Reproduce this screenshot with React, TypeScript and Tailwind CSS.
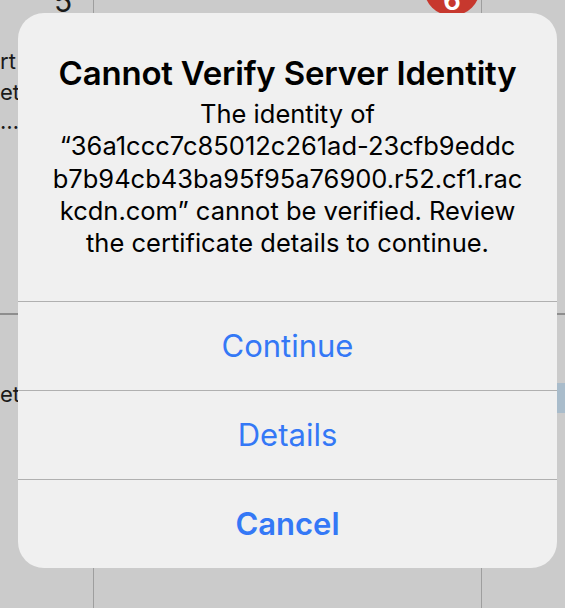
import React from 'react';

const bodyLines = [
  'The identity of',
  '\u201C36a1ccc7c85012c261ad-23cfb9eddc',
  'b7b94cb43ba95f95a76900.r52.cf1.rac',
  'kcdn.com\u201D cannot be verified. Review',
  'the certificate details to continue.',
];

const actions = [
  { label: 'Continue', bold: false },
  { label: 'Details', bold: false },
  { label: 'Cancel', bold: true },
];

export default function App() {
  return (
    <div
      className="relative w-[565px] h-[608px] overflow-hidden bg-[#cbcbcb]"
      style={{ fontFamily: 'Inter, "Noto Sans", sans-serif' }}
    >
      {/* calendar behind the alert */}
      <div className="grid grid-cols-[94px_388px_83px] h-full">
        <div className="flex flex-col border-r border-[#9e9e9e] text-[#1a1a1a]">
          <div className="h-[313px] flex flex-col relative">
            <span className="absolute left-[54px] -top-[14px] text-[30px] leading-none">5</span>
            <span className="mt-[46px] text-[22px] leading-[31px]">rt</span>
            <span className="text-[22px] leading-[31px]">et</span>
            <span className="text-[22px] leading-[31px] -mt-[2px]">…</span>
          </div>
          <div className="h-[2px] bg-[#8e8e8e]" />
          <div className="pt-[64px] text-[22px] leading-[31px]">et</div>
        </div>
        <div className="border-r border-[#9e9e9e]" />
        <div className="flex flex-col">
          <div className="h-[313px]" />
          <div className="h-[2px] bg-[#8e8e8e]" />
          <div className="mt-[68px] h-[30px] bg-[#a9bccb]" />
        </div>
      </div>

      {/* badge peeking above the alert */}
      <div className="absolute left-[424px] -top-[40px] w-[56px] h-[56px] rounded-full bg-[#c7382e] flex items-end justify-center pb-[2px]">
        <span className="text-white text-[28px] font-semibold leading-none">6</span>
      </div>

      {/* alert */}
      <div className="absolute left-[18px] top-[13px] w-[539px] h-[555px] rounded-[26px] bg-[#f0f0f0] flex flex-col overflow-hidden">
        <div className="h-[288px] flex flex-col items-center pt-[40px] text-black">
          <h1 className="text-[33px] leading-[40px] font-semibold tracking-[-0.2px] whitespace-nowrap">
            Cannot Verify Server Identity
          </h1>
          <p className="mt-[5px] text-[25.5px] leading-[32.3px] text-center">
            {bodyLines.map((l) => (
              <span key={l} className="block whitespace-nowrap">
                {l}
              </span>
            ))}
          </p>
        </div>
        {actions.map((a) => (
          <button
            key={a.label}
            className={`h-[89px] border-t border-[#b0b0b0] flex items-center justify-center text-[31px] text-[#3478f6] ${
              a.bold ? 'font-semibold' : 'font-normal'
            }`}
          >
            {a.label}
          </button>
        ))}
      </div>
    </div>
  );
}
